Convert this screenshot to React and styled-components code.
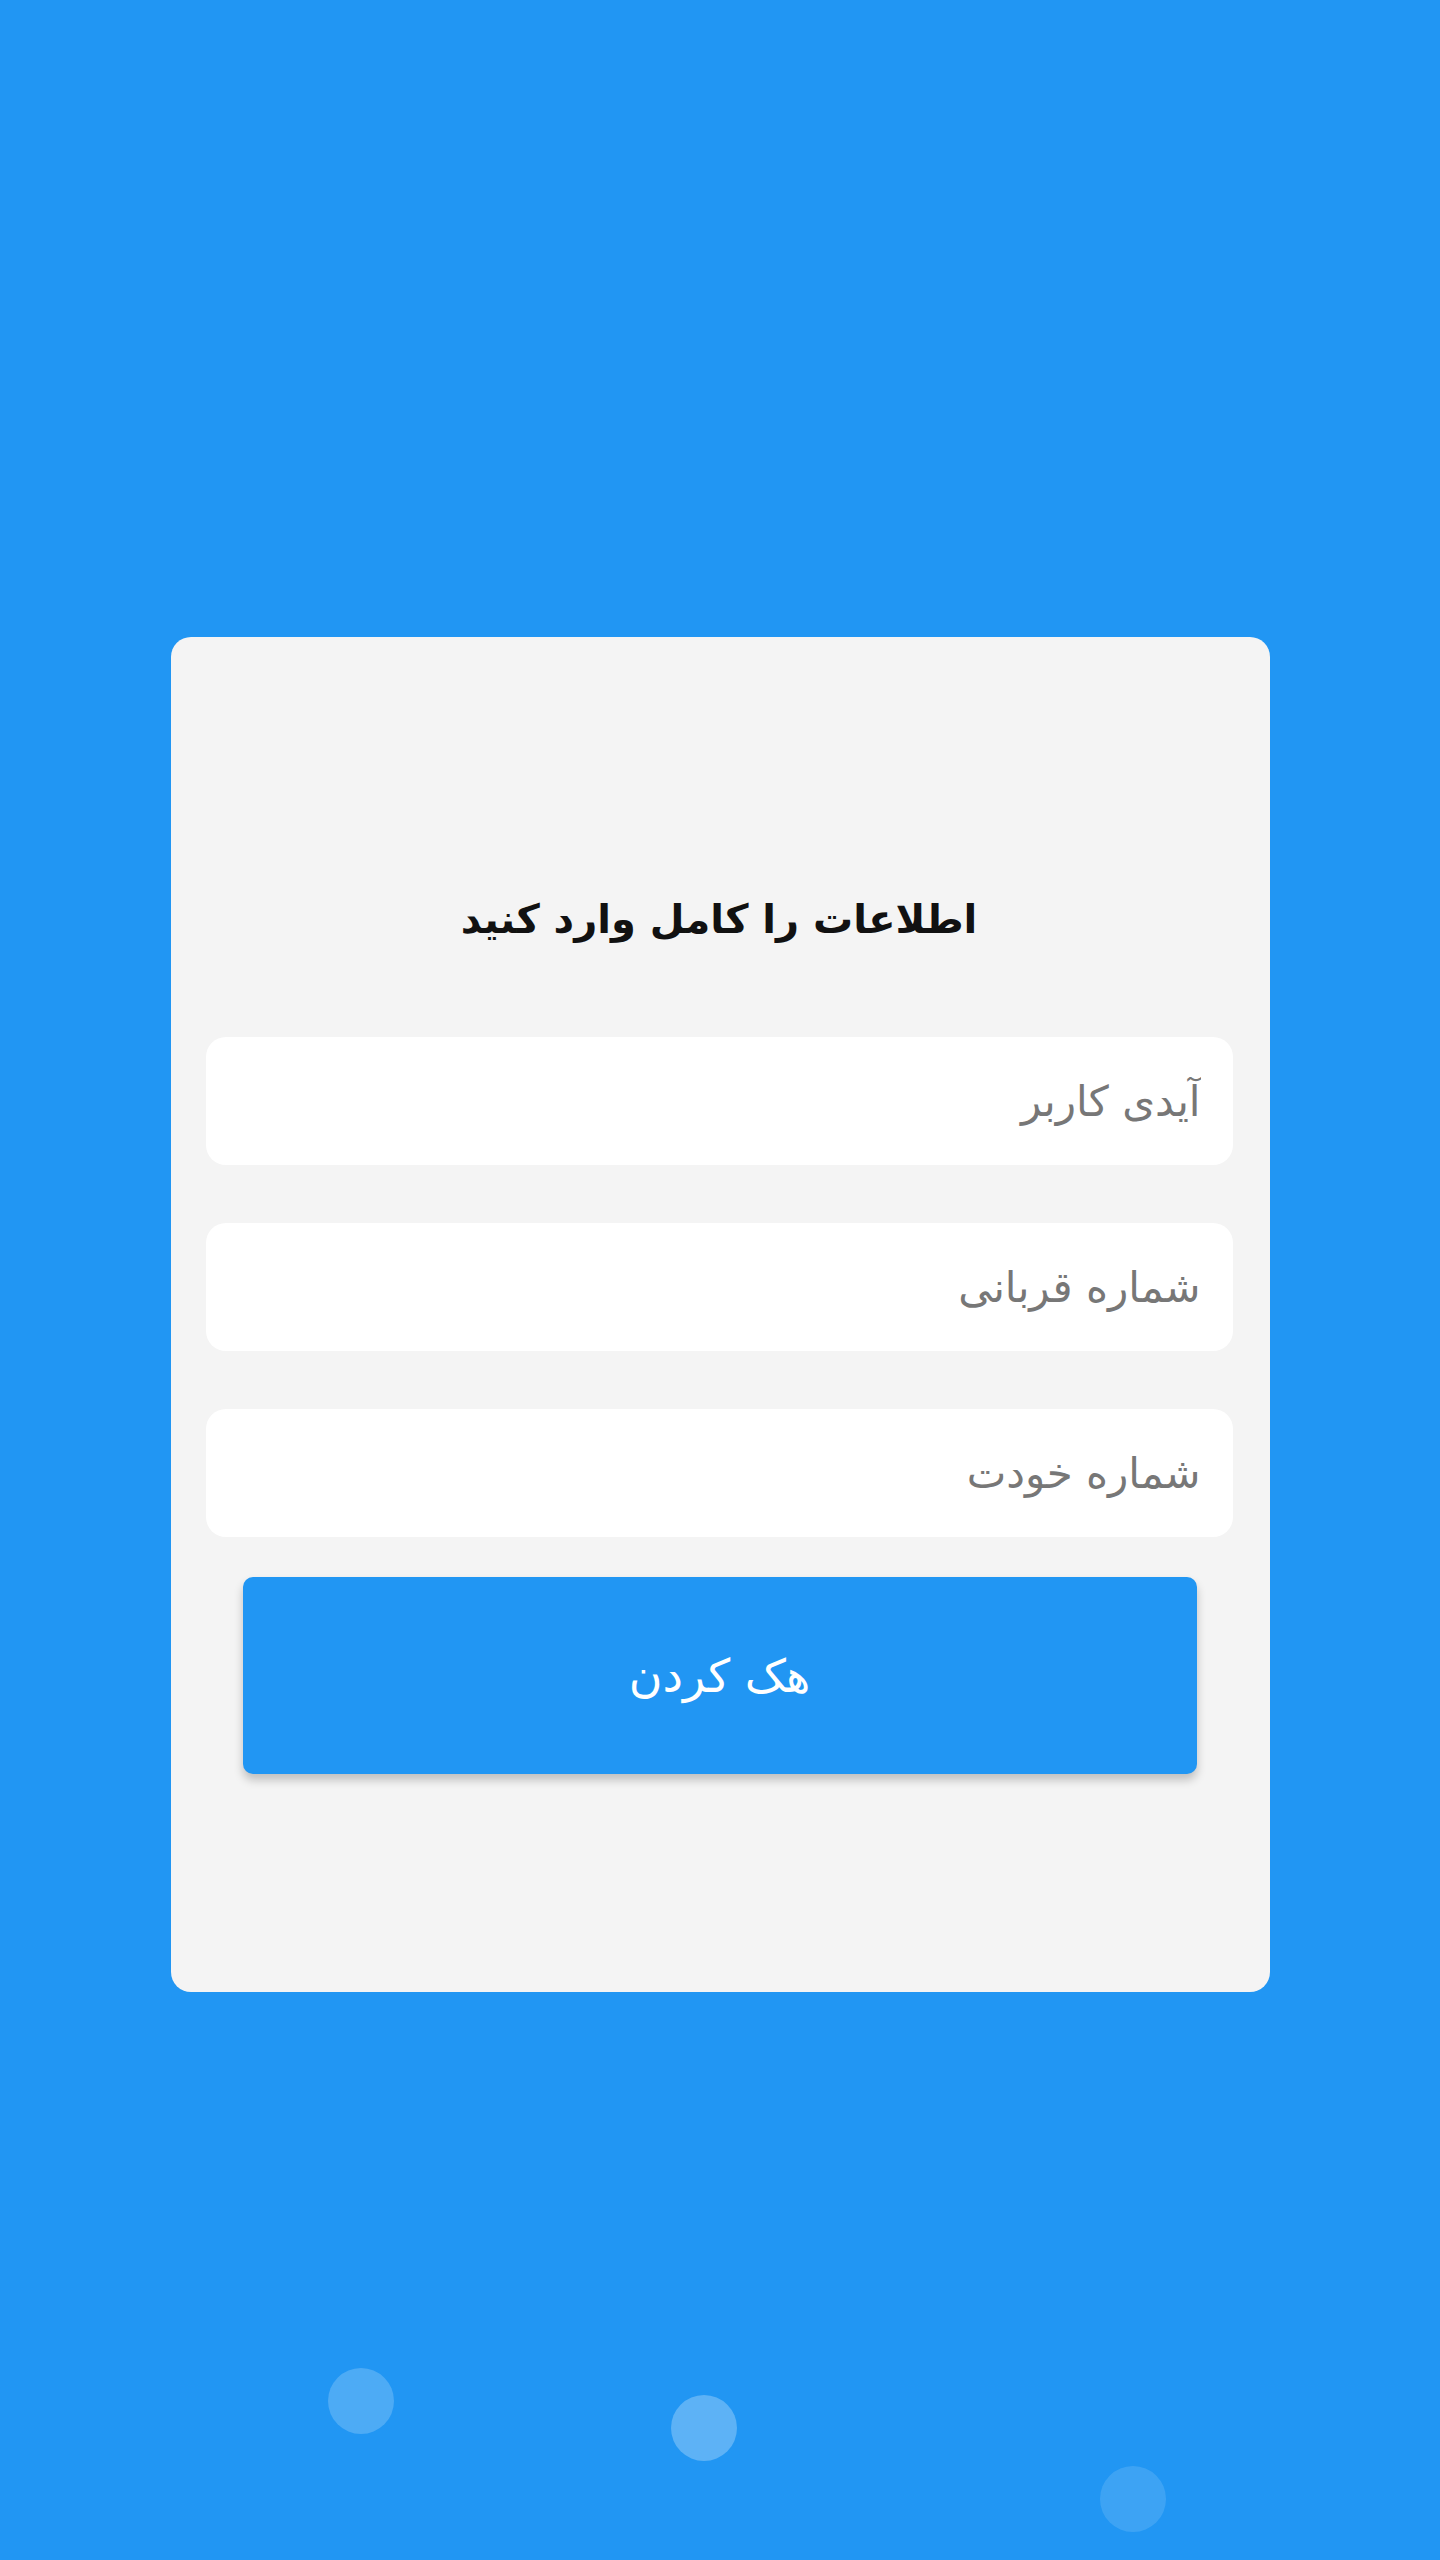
import React from 'react';
import styled, {createGlobalStyle} from 'styled-components';

const GlobalStyle = createGlobalStyle`
html, body {
    margin: 0;
    padding: 0;
    background: #2196f3;
}
* {
    box-sizing: border-box;
}
`;

const bubbles = [
    {x: 328, y: 2368, alpha: 0.2},
    {x: 671, y: 2395, alpha: 0.27},
    {x: 1100, y: 2466, alpha: 0.13},
];

const App = () => {
    return (
        <Page dir="rtl">
            <GlobalStyle />
            <Card>
                <Title>اطلاعات را کامل وارد کنید</Title>
                <Fields>
                    <Field type="text" placeholder="آیدی کاربر" />
                    <Field type="tel" placeholder="شماره قربانی" />
                    <Field type="tel" placeholder="شماره خودت" />
                </Fields>
                <HackButton type="button">هک کردن</HackButton>
            </Card>
            {bubbles.map((b, i) => (
                <Bubble key={i} style={{left: b.x, top: b.y}} alpha={b.alpha} />
            ))}
        </Page>
    );
};

const Page = styled.div`
position: relative;
width: 1440px;
height: 2560px;
overflow: hidden;
background: #2196f3;
padding-top: 637px;
font-family: "DejaVu Sans", "Noto Sans", sans-serif;
`;

const Card = styled.div`
width: 1099px;
height: 1355px;
margin: 0 auto;
background: #f4f4f4;
border-radius: 20px;
padding: 250px 37px 0 35px;
display: flex;
flex-direction: column;
align-items: stretch;
`;

const Title = styled.h1`
margin: 0;
height: 64px;
line-height: 64px;
text-align: center;
font-size: 40px;
font-weight: bold;
color: #111;
`;

const Fields = styled.div`
margin-top: 86px;
display: flex;
flex-direction: column;
gap: 58px;
`;

const Field = styled.input`
height: 128px;
width: 100%;
border: none;
outline: none;
border-radius: 20px;
background: #ffffff;
padding: 0 32px;
font-family: inherit;
font-size: 42px;
color: #222;
text-align: right;

&::placeholder {
    color: #777;
}
`;

const HackButton = styled.button`
margin: 40px 36px 0 37px;
height: 197px;
border: none;
border-radius: 10px;
background: #2196f3;
color: #ffffff;
font-family: inherit;
font-size: 46px;
box-shadow: 0 6px 10px rgba(0, 0, 0, 0.22);
cursor: pointer;
`;

const Bubble = styled.div`
position: absolute;
width: 66px;
height: 66px;
border-radius: 50%;
background: rgba(255, 255, 255, ${props => props.alpha});
`;

export default App;
